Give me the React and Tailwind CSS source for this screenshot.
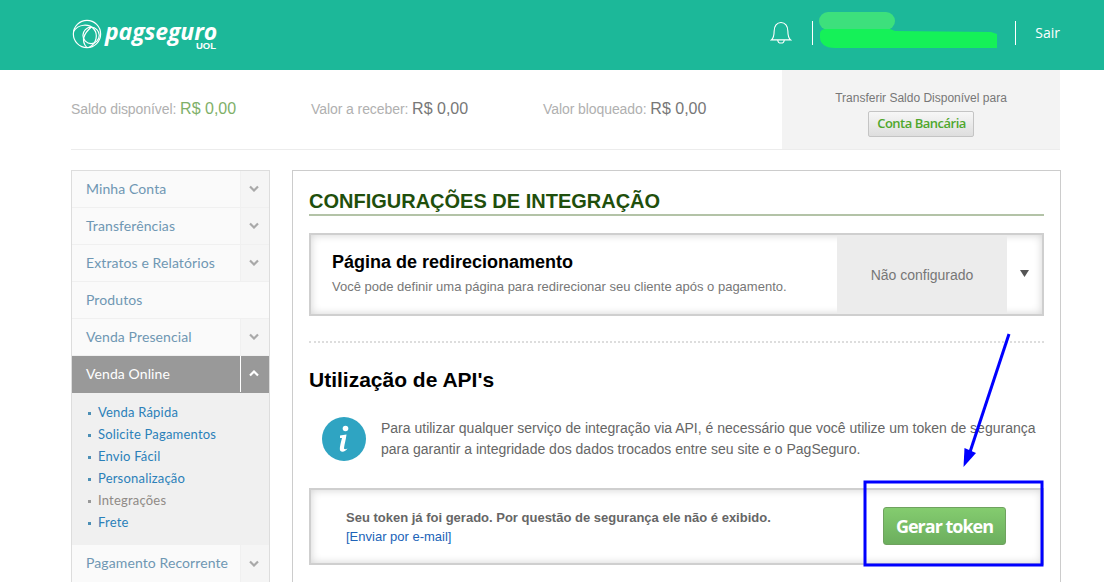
import React from "react";

const Chevron = ({ up, color = "#a9a9a9" }) => (
  <svg width="10" height="7" viewBox="0 0 10 7" className="block">
    <path d={up ? "M1 5.5 L5 1.5 L9 5.5" : "M1 1.5 L5 5.5 L9 1.5"} fill="none" stroke={color} strokeWidth="2.2" />
  </svg>
);

const MenuRow = ({ label, arrow = true, active = false, last = false }) => (
  <div className={`flex h-[37px] ${last ? "" : "border-b"} ${active ? "bg-[#999999] border-[#999999] text-white" : "bg-[#fafafa] border-[#f0f0f0] text-[#6f97b3]"}`}>
    <div className="flex-1 flex items-center pl-[14px] pb-[2px] text-[14px] font-['Lato','Open_Sans',sans-serif] tracking-[0.1px]">{label}</div>
    {arrow && (
      <div className={`w-[29px] flex items-center justify-center pb-[1px] pr-[2px] ${active ? "border-l border-white" : "border-l border-[#f0f0f0] bg-[#f5f5f5]"}`}>
        <Chevron up={active} color={active ? "#ffffff" : "#a9a9a9"} />
      </div>
    )}
  </div>
);

const SubItem = ({ label, current }) => (
  <li className={`h-[22px] flex items-center text-[13px] font-['Lato','Open_Sans',sans-serif] tracking-[0.2px] ${current ? "text-[#8f8a86]" : "text-[#2b80b9]"}`}>
    <span className={`w-[3px] h-[3px] mr-[7px] ${current ? "bg-[#999999]" : "bg-[#4c8fb5]"}`} />
    {label}
  </li>
);

const Balance = ({ label, value, green, className }) => (
  <div className={`text-[14px] text-[#b0b0b0] whitespace-nowrap tracking-[-0.08px] ${className}`}>
    {label}: <span className={`text-[16px] tracking-normal ${green ? "text-[#7fb069]" : "text-[#777777]"}`}>{value}</span>
  </div>
);

const InsetBox = ({ className, children }) => (
  <div className={`border-[2px] border-[#cfcfcf] shadow-[inset_0_0_8px_rgba(0,0,0,0.18)] flex ${className}`}>{children}</div>
);

export default function App() {
  return (
    <div className="relative w-[1104px] h-[582px] overflow-hidden bg-white font-['Liberation_Sans',Arial,sans-serif]">
      {/* Header */}
      <header className="h-[70px] bg-[#1cb899] flex items-center pl-[72px] pr-[44px]">
        <div className="flex items-center pb-[3px]">
          <svg width="30" height="30" viewBox="0 0 33 33" fill="none" stroke="white" strokeWidth="1.3">
            <circle cx="16.5" cy="16.5" r="15" />
            <path d="M1.5 14 C7 5 19 5 24 11 C29 17 27 27 19 31" />
            <circle cx="21" cy="18" r="9" />
            <path d="M16 31 C10 24 13 16 21 9" />
          </svg>
          <div className="relative ml-[3px] w-[112px] h-[36px] text-white">
            <span className="absolute left-0 top-[4px] text-[23px] leading-[22px] font-bold italic font-['Open_Sans',sans-serif] tracking-[-0.1px]">pagseguro</span>
            <span className="absolute right-[1px] top-[26px] text-[9.5px] leading-[7px] font-bold font-['Liberation_Sans',sans-serif]">UOL</span>
          </div>
        </div>
        <div className="ml-auto flex items-center pb-[4px]">
          <svg width="22" height="24" viewBox="0 0 24 26" fill="none" stroke="white" strokeWidth="1.2">
            <path d="M1.5 20.5 C4.5 18 4.5 15 4.5 11 C4.5 5.5 7.5 1.5 12 1.5 C16.5 1.5 19.5 5.5 19.5 11 C19.5 15 19.5 18 22.5 20.5 Z" />
            <path d="M8.5 20.5 C8.5 25 15.5 25 15.5 20.5" />
          </svg>
          <div className="ml-[20px] w-px h-[24px] bg-white" />
          <div className="w-[202px]" />
          <div className="w-px h-[24px] bg-white" />
          <span className="ml-[19.5px] text-[14px] text-white font-['Open_Sans',sans-serif] leading-[24px]">Sair</span>
        </div>
      </header>

      {/* Redacted name (green scribble over the header) */}
      <svg className="absolute left-[815px] top-[10px]" width="190" height="42" viewBox="0 0 190 42">
        <rect x="4" y="2" width="76" height="18" rx="9" fill="#3de07c" />
        <path d="M5 24 C5 20 8 19 12 19 L75 19 L80 21 L176 22 L182 24 L182 38 L20 38 C10 38 5 33 5 28 Z" fill="#15f158" />
      </svg>

      {/* Balance bar */}
      <section className="ml-[71px] w-[989px] h-[80px] border-b border-[#ececec] flex">
        <div className="flex-1 flex items-center pb-[2px]">
          <Balance label="Saldo disponível" value="R$ 0,00" green className="w-[240px]" />
          <Balance label="Valor a receber" value="R$ 0,00" className="w-[232px]" />
          <Balance label="Valor bloqueado" value="R$ 0,00" />
        </div>
        <div className="w-[278px] bg-[#f3f3f3] flex flex-col items-center pt-[19px]">
          <span className="text-[12px] leading-[18px] text-[#777777]">Transferir Saldo Disponível para</span>
          <button className="mt-[4px] w-[106px] h-[26px] rounded-[2px] border border-[#c4c4c4] bg-gradient-to-b from-[#f7f7f7] to-[#dedede] text-[13px] font-semibold tracking-[-0.5px] pl-[1px] text-[#4fa72c] font-['Open_Sans',sans-serif]">
            Conta Bancária
          </button>
        </div>
      </section>

      {/* Body */}
      <div className="ml-[71px] mt-[20px] flex items-start gap-[22px]">
        <aside className="w-[199px] border border-[#dddddd] border-b-0">
          <MenuRow label="Minha Conta" />
          <MenuRow label="Transferências" />
          <MenuRow label="Extratos e Relatórios" />
          <MenuRow label="Produtos" arrow={false} />
          <MenuRow label="Venda Presencial" />
          <MenuRow label="Venda Online" active />
          <ul className="bg-[#f0f0f0] pl-[16px] pt-[9px] pb-[11px]">
            <SubItem label="Venda Rápida" />
            <SubItem label="Solicite Pagamentos" />
            <SubItem label="Envio Fácil" />
            <SubItem label="Personalização" />
            <SubItem label="Integrações" current />
            <SubItem label="Frete" />
          </ul>
          <MenuRow label="Pagamento Recorrente" last />
        </aside>

        <main className="w-[769px] border border-[#cccccc] pl-[16px] pr-[16px] pt-[18px] pb-[40px]">
          <h1 className="h-[27px] border-b-2 border-[#b3c3a7] text-[20px] leading-[24px] font-bold text-[#1f4f0c] whitespace-nowrap">
            CONFIGURAÇÕES DE INTEGRAÇÃO
          </h1>

          <InsetBox className="mt-[17px] h-[83px]">
            <div className="w-[526px] pl-[21px] pt-[15px]">
              <h2 className="text-[18px] leading-[24px] font-bold text-black">Página de redirecionamento</h2>
              <p className="text-[13px] leading-[18px] text-[#777777] mt-[4px]">Você pode definir uma página para redirecionar seu cliente após o pagamento.</p>
            </div>
            <div className="w-[170px] bg-[#ececec] flex items-center justify-center pt-[2px] text-[14px] text-[#777777]">Não configurado</div>
            <div className="flex-1 flex items-center justify-center pb-[2px]">
              <svg width="9" height="7" viewBox="0 0 9 7"><path d="M0 0 H9 L4.5 7 Z" fill="#555555" /></svg>
            </div>
          </InsetBox>

          <div className="mt-[25px] border-t-2 border-dotted border-[#dddddd]" />

          <h2 className="mt-[24px] text-[21px] leading-[26px] font-bold text-black">Utilização de API's</h2>

          <div className="mt-[24px] flex items-center h-[44px] pl-[13px]">
            <svg width="44" height="44" viewBox="0 0 44 44" className="shrink-0">
              <circle cx="22" cy="22" r="22" fill="#2fa4c2" />
              <circle cx="23.5" cy="11.5" r="2.8" fill="white" />
              <path d="M18 18.5 L24.5 17.5 C24 22 22.5 27 22 31 C22 32.5 23.5 32.5 25.5 31.5 C24 34.5 20 35.5 18.5 34 C17 32.5 18.5 27 20 21 L18 21 Z" fill="white" />
            </svg>
            <p className="ml-[15px] text-[14px] leading-[21px] text-[#666666] whitespace-nowrap">
              Para utilizar qualquer serviço de integração via API, é necessário que você utilize um token de segurança
              <br />
              para garantir a integridade dos dados trocados entre seu site e o PagSeguro.
            </p>
          </div>

          <InsetBox className="mt-[27px] h-[77px] items-center">
            <div className="pl-[35px] pt-[2px] flex-1">
              <p className="text-[13px] leading-[18px] font-bold text-[#666666]">Seu token já foi gerado. Por questão de segurança ele não é exibido.</p>
              <a className="block text-[13px] leading-[20px] text-[#2063b8]">[Enviar por e-mail]</a>
            </div>
            <button className="mr-[36px] mb-[1px] w-[123px] h-[38px] rounded-[3px] border border-[#6fa25f] bg-gradient-to-b from-[#84cc6f] to-[#6cae5e] text-white text-[18px] font-bold tracking-[-1px] font-['Open_Sans',sans-serif]">
              Gerar token
            </button>
          </InsetBox>
        </main>
      </div>

      {/* Annotation drawn over the screenshot */}
      <svg className="absolute left-0 top-0 pointer-events-none" width="1104" height="582" viewBox="0 0 1104 582" fill="none">
        <rect x="865" y="482" width="177" height="83" stroke="#0000ff" strokeWidth="3" />
        <path d="M1009 334 L970 452" stroke="#0000ff" strokeWidth="3" />
        <path d="M963.5 467 L964.5 448 L976 453 Z" fill="#0000ff" />
      </svg>
    </div>
  );
}
